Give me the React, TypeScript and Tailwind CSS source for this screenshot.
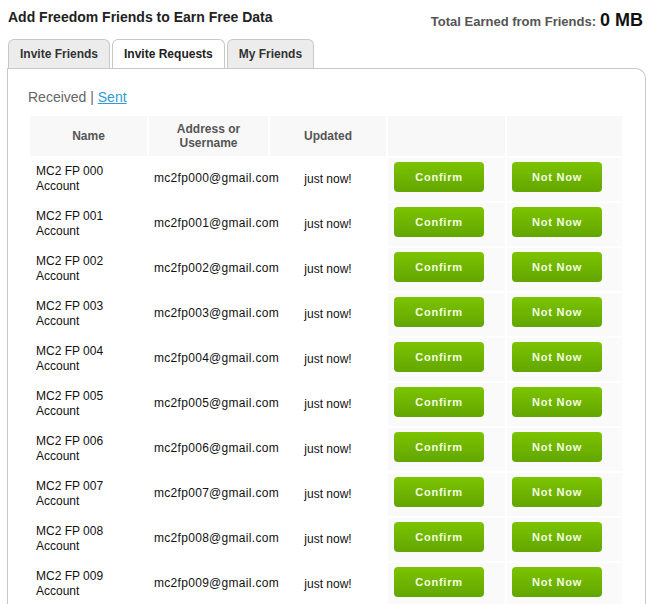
import React from 'react';

const rows = Array.from({ length: 10 }, (_, i) => {
  const n = String(i).padStart(3, '0');
  return { name: `MC2 FP ${n}`, email: `mc2fp${n}@gmail.com` };
});

function GreenButton({ label }: { label: string }) {
  return (
    <button className="w-[90px] h-[30px] rounded-[4px] bg-gradient-to-b from-[#7cc400] to-[#62a600] text-[#f4ffe0] text-[11px] font-bold tracking-[0.07em]">
      {label}
    </button>
  );
}

export default function App() {
  return (
    <div className="w-[655px] h-[604px] overflow-hidden bg-white text-[#222] [font-family:'Liberation_Sans',Arial,sans-serif]">
      <div className="flex justify-between pl-[8px] pr-[12px] pt-[8px] h-[32px]">
        <h1 className="text-[14px] font-bold text-[#222] leading-[18px]">
          Add Freedom Friends to Earn Free Data
        </h1>
        <div className="flex items-baseline gap-1 -mt-[1px]">
          <span className="text-[13px] font-bold text-[#555]">Total Earned from Friends:</span>
          <span className="text-[18px] font-bold text-[#111]">0 MB</span>
        </div>
      </div>

      <div className="flex pl-[8px] gap-[2px] mt-[7px] relative z-10">
        <div className="h-[29px] px-[11px] flex items-center bg-[#ececec] border border-b-0 border-[#c8c8c8] rounded-t-[6px] text-[12px] font-bold text-[#333]">
          Invite Friends
        </div>
        <div className="h-[29px] px-[11px] flex items-center bg-white border border-b-0 border-[#c8c8c8] rounded-t-[6px] text-[12px] font-bold text-[#222] -mb-[1px]">
          Invite Requests
        </div>
        <div className="h-[29px] px-[11px] flex items-center bg-[#ececec] border border-b-0 border-[#c8c8c8] rounded-t-[6px] text-[12px] font-bold text-[#333]">
          My Friends
        </div>
      </div>

      <div className="ml-[7px] w-[639px] border border-b-0 border-[#c8c8c8] rounded-tr-[10px] pl-[22px] pt-[19px] h-[600px]">
        <div className="text-[14px] text-[#666] leading-[18px] -ml-[2px]">
          Received | <a className="text-[#2e9ad6] underline">Sent</a>
        </div>

        <div className="mt-[10px] grid grid-cols-[117px_119px_116px_117px_115px] gap-[2px]">
          <div className="h-[40px] bg-[#f8f8f8] flex items-center justify-center text-[12px] font-bold text-[#555]">Name</div>
          <div className="h-[40px] bg-[#f8f8f8] flex items-center justify-center text-center text-[12px] font-bold text-[#555] leading-[14px]">
            Address or
            <br />
            Username
          </div>
          <div className="h-[40px] bg-[#f8f8f8] flex items-center justify-center text-[12px] font-bold text-[#555]">Updated</div>
          <div className="h-[40px] bg-[#f8f8f8]" />
          <div className="h-[40px] bg-[#f8f8f8]" />

          {rows.map((r) => (
            <React.Fragment key={r.name}>
              <div className="h-[43px] flex items-center pl-[6px] pb-[2px] text-[12px] leading-[15px] text-[#111]">
                <div>
                  {r.name}
                  <br />
                  Account
                </div>
              </div>
              <div className="relative z-10 h-[43px] flex items-center pl-[5px] pb-[3px] text-[12px] tracking-[0.3px] text-[#111] whitespace-nowrap">
                {r.email}
              </div>
              <div className="h-[43px] flex items-center justify-center pb-[2px] text-[12px] text-[#111]">just now!</div>
              <div className="h-[43px] pl-[6px] pt-[4px] bg-[#fafafa]">
                <GreenButton label="Confirm" />
              </div>
              <div className="h-[43px] pl-[5px] pt-[4px] bg-[#fafafa]">
                <GreenButton label="Not Now" />
              </div>
            </React.Fragment>
          ))}
        </div>
      </div>
    </div>
  );
}
